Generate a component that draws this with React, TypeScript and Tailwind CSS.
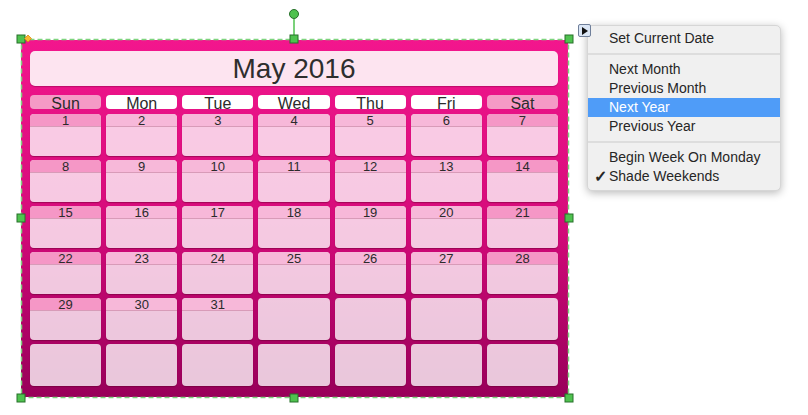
import React from "react";

const DAYS = ["Sun", "Mon", "Tue", "Wed", "Thu", "Fri", "Sat"];

// May 2016 starts on a Sunday, 31 days, 6 rows shown
const cells: (number | null)[] = Array.from({ length: 42 }, (_, i) =>
  i < 31 ? i + 1 : null
);

function Handle({ x, y }: { x: number; y: number }) {
  return (
    <rect
      x={x - 4}
      y={y - 4}
      width={8}
      height={8}
      fill="#4fc24f"
      stroke="#27702a"
      strokeWidth={1}
    />
  );
}

function DayCell({ day, weekend }: { day: number | null; weekend: boolean }) {
  if (day === null) {
    return (
      <div className="h-[42px] rounded-[4px] bg-white/[0.78] shadow-[0_1px_1px_rgba(90,0,40,0.45)]" />
    );
  }
  return (
    <div className="h-[42px] rounded-[4px] bg-white/[0.78] shadow-[0_1px_1px_rgba(90,0,40,0.45)] overflow-hidden flex flex-col">
      <div
        className={
          "h-[13px] shrink-0 leading-[13px] text-center text-[13px] text-[#2b2b2b] border-b border-[#d89bb8] " +
          (weekend ? "bg-[#f597c6]" : "bg-[#f7b8d9]")
        }
      >
        {day}
      </div>
    </div>
  );
}

function ContextMenu() {
  const item = "h-[19px] leading-[19px] pl-[21px] text-[14px] text-[#262626]";
  const sep = <div className="my-[5px] h-[2px] bg-[#dddddd]" />;
  return (
    <div className="absolute left-[587px] top-[25px] w-[194px] rounded-[5px] bg-[#f0f0f0] pt-[3px] pb-[4px] shadow-[0_2px_8px_rgba(0,0,0,0.28)] border border-[#d6d6d6] font-['Liberation_Sans',Arial,sans-serif]">
      <div className={item}>Set Current Date</div>
      {sep}
      <div className={item}>Next Month</div>
      <div className={item}>Previous Month</div>
      <div className={item + " bg-[#4f9cf8] !text-white"}>Next Year</div>
      <div className={item}>Previous Year</div>
      {sep}
      <div className={item}>Begin Week On Monday</div>
      <div className={item + " relative"}>
        <span className="absolute left-[6px] top-0 text-[16px] font-bold">✓</span>
        Shade Weekends
      </div>
    </div>
  );
}

export default function App() {
  return (
    <div className="relative w-[808px] h-[415px] bg-white overflow-hidden font-['Liberation_Sans',Arial,sans-serif]">
      {/* Calendar shape */}
      <div className="ml-[21px] mt-[40px] w-[547px] h-[357px] rounded-[3px] bg-gradient-to-b from-[#f3168d] via-[#d60b7b] to-[#98005a] pl-[9px] pr-[10px] pt-[11px]">
        <div className="h-[35px] rounded-[5px] bg-[#fde4f0] shadow-[0_1px_1px_rgba(120,0,60,0.4)] flex items-center justify-center text-[28px] text-[#2e2e2e]">
          May 2016
        </div>

        <div className="mt-[9px] grid grid-cols-7 gap-[5px]">
          {DAYS.map((d, i) => (
            <div
              key={d}
              className={
                "h-[14px] rounded-[4px] text-center text-[16px] leading-[18px] text-[#2b2b2b] " +
                (i === 0 || i === 6 ? "bg-[#f59ac6]" : "bg-white")
              }
            >
              {d}
            </div>
          ))}
        </div>

        <div className="mt-[5px] grid grid-cols-7 gap-x-[5px] gap-y-[4px]">
          {cells.map((c, i) => (
            <DayCell key={i} day={c} weekend={i % 7 === 0 || i % 7 === 6} />
          ))}
        </div>
      </div>

      {/* Selection overlay */}
      <svg
        className="absolute left-0 top-0 pointer-events-none"
        width={808}
        height={415}
      >
        <rect
          x={21.5}
          y={39.5}
          width={547}
          height={358}
          fill="none"
          stroke="#7ed47e"
          strokeWidth={1.5}
          strokeDasharray="5 3"
        />
        <line x1={294} y1={19} x2={294} y2={39} stroke="#4fc24f" strokeWidth={1.5} />
        <circle cx={294} cy={14} r={4.5} fill="#4fc24f" stroke="#27702a" strokeWidth={1} />
        <Handle x={21} y={39} />
        <Handle x={294} y={39} />
        <Handle x={569} y={39} />
        <Handle x={21} y={218} />
        <Handle x={569} y={218} />
        <Handle x={21} y={398} />
        <Handle x={294} y={398} />
        <Handle x={569} y={398} />
        <path d="M28 35 L31.5 38.5 L28 42 L24.5 38.5 Z" fill="#f7b733" stroke="#d88a12" strokeWidth={0.8} />
      </svg>

      <ContextMenu />

      {/* Action button */}
      <div className="absolute left-[578px] top-[24px] w-[13px] h-[13px] rounded-[2px] border border-[#6f7f9a] bg-[#dbe6f5] flex items-center justify-center">
        <svg width="6" height="8" viewBox="0 0 6 8">
          <path d="M0 0 L6 4 L0 8 Z" fill="#111" />
        </svg>
      </div>
    </div>
  );
}
